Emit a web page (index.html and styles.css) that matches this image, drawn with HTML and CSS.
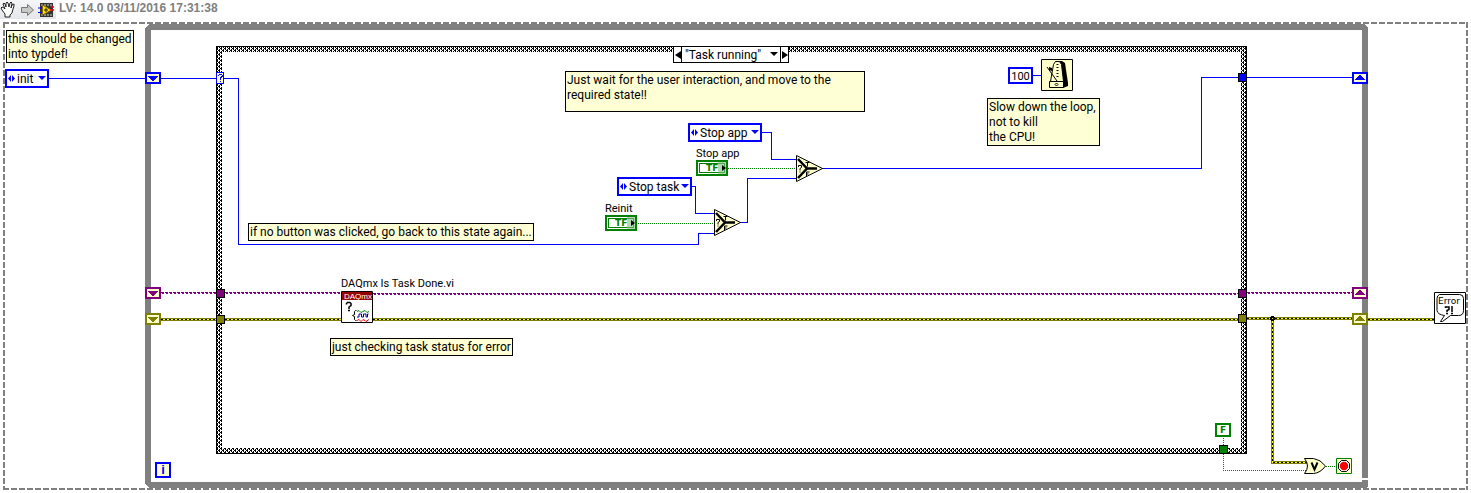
FILE: index.html
```
<!DOCTYPE html>
<html lang="en">
<head>
<meta charset="utf-8">
<title>Block diagram</title>
<link rel="stylesheet" href="styles.css">
</head>
<body>
<main class="canvas">
  <header class="snippet-bar">
    <svg class="snippet-icons" width="56" height="19" viewBox="0 0 56 19" aria-hidden="true">
      <path d="M5 17v-3l-3-4-1-2 1-1 2 1 1 1-2-5 1-1 1 1 1 3V3l1-1 1 1 1 4 1-4 1-1 1 1-1 5 1-3 2-1v2l-1 3-1 4-2 2v2z" fill="#fff" stroke="#222"/>
      <path d="M21.500 7.500h6v-3l6 5.500-6 5.500v-3h-6z" fill="#c8c8c8" stroke="#777"/>
      <path d="M40 3h13v14H40z" fill="#333"/>
      <path d="M41 5h12M41 15h12" stroke="#ddd" stroke-dasharray="2 1"/>
      <path d="M38 8h5M38 12.500h5" stroke="#00f"/>
      <path d="M42.500 5v10l9-5z" fill="#fd0" stroke="#860"/>
      <path d="M50 10h4M51 7h3" stroke="#f00" stroke-width="1.500"/>
      <path d="M44 10h4m-2-2v4" stroke="#222"/>
    </svg>
    <span class="snippet-title">LV: 14.0 03/11/2016 17:31:38</span>
  </header>

  <svg class="wires" width="1471" height="493" viewBox="0 0 1471 493" aria-hidden="true">
    <defs>
      <pattern id="hatch" width="4" height="4" patternUnits="userSpaceOnUse" shape-rendering="crispEdges">
        <rect width="4" height="4" fill="#fff"/>
        <path d="M0 0h2v1H0zM1 1h1v1H1zM3 1h1v1H3zM2 2h2v1H2zM1 3h1v1H1zM3 3h1v1H3z"/>
      </pattern>
      <g id="select-node">
        <path d="M.5 .5v26L26.500 13.500z" fill="#ffffcc" stroke="#000"/>
        <path d="M2 4l9 9.500L2 23M10 13.500h11" fill="none" stroke="#000" stroke-width="2.500"/>
        <path d="M2.500 12v-1.500h3v2l-1.500 1v2M3.500 17h1M9.500 7.500h4M11.500 7.500v4M10.500 21v-4h3M10.500 19h2" fill="none" stroke="#000"/>
      </g>
      <g id="down"><path d="M3 4h10v1H3zM4 5h8v1H4zM5 6h6v1H5zM6 7h4v1H6zM7 8h2v1H7z"/></g>
      <g id="up"><path d="M7 3h2v1H7zM6 4h4v1H6zM5 5h6v1H5zM4 6h8v1H4zM3 7h10v1H3z"/></g>
    </defs>
    <g shape-rendering="crispEdges">
      <path d="M3 23H1468M4 22V490M1467 22V490M3 489H1468" fill="none" stroke="#808080" stroke-width="2" stroke-dasharray="6 2"/>
      <path d="M149 24H1364l4 4V478H1362V30H151V482H1362V480H1368V486l-2 2H149l-4-4V28z" fill="#808080"/>
      <path d="M216 46H1247V454H216zM222 52V448H1241V52z" fill="url(#hatch)" fill-rule="evenodd"/>
      <path d="M216.500 46.500H1246.500V453.500H216.500z" fill="none" stroke="#000"/>

      <g fill="none" stroke="#0000ff">
        <path d="M49 78.500H145M161 78.500H216M224 78.500H238.500V244.500H698.500V233.500H714"/>
        <path d="M692 186.500H695.500V213.500H714M740 222.500H747.500V178.500H796M762 132.500H771.500V159.500H796"/>
        <path d="M822 168.500H1201.500V77.500H1238M1247 77.500H1352M1033 75.500H1041"/>
      </g>
      <g fill="none" stroke="#008000" stroke-dasharray="1 1">
        <path d="M728 168.500H797M638 223.500H714M1223.500 438V470.500H1306M1326 466.500H1336"/>
      </g>
      <g fill="none" stroke="#800080">
        <path d="M161 292.500H341M373 293.500H1238M1247 292.500H1352" stroke-dasharray="3 1"/>
        <path d="M161 293.500H341M373 294.500H1238M1247 293.500H1352" stroke-dasharray="2 2" stroke-dashoffset="3"/>
      </g>
      <g fill="none">
        <path d="M161 319.500H341M373 319.500H1238M1247 318.500H1352M1368 319.500H1434M1272.500 319V462.500H1308" stroke="#808000" stroke-width="3"/>
        <path d="M161 319.500H341M373 319.500H1238M1247 318.500H1352M1368 319.500H1434M1272.500 319V462.500H1308" stroke="#ffff00"/>
        <path d="M161 319.500H341M373 319.500H1238M1247 318.500H1352M1368 319.500H1434M1272.500 319V462.500H1308" stroke="#000" stroke-dasharray="2 2"/>
      </g>
      <path d="M1271 316h3v1h1v3h-1v1h-3v-1h-1v-3h1z"/><path d="M1272 318h1v1h-1z" fill="#ff0"/>

      <g stroke="#000">
        <path d="M1238.500 73.500h8v8h-8z" fill="#0000ff"/>
        <path d="M216.500 289.500h8v8h-8zM1238.500 289.500h8v8h-8z" fill="#800080"/>
        <path d="M216.500 315.500h8v8h-8zM1238.500 314.500h8v8h-8z" fill="#808000"/>
        <path d="M1219.500 445.500h8v8h-8z" fill="#008000"/>
      </g>
      <g fill="#ffffcc" stroke-width="2">
        <path d="M146 73h14v10h-14zM1353 73h14v10h-14z" stroke="#0000ff"/>
        <path d="M146 288h14v10h-14zM1353 288h14v10h-14z" stroke="#800080"/>
        <path d="M146 314h14v10h-14zM1353 314h14v10h-14z" stroke="#808000"/>
        <path d="M216.500 72.500h7v11h-7z" stroke="#0000ff" stroke-width="1"/>
      </g>
      <use href="#down" x="145" y="72" fill="#0000ff"/><use href="#up" x="1352" y="72" fill="#0000ff"/>
      <use href="#down" x="145" y="287" fill="#800080"/><use href="#up" x="1352" y="287" fill="#800080"/>
      <use href="#down" x="145" y="313" fill="#808000"/><use href="#up" x="1352" y="313" fill="#808000"/>
      <path d="M218 75h1v-1h3v1h1v2h-1v1h-1v2h-1v-3h1v-1h1v-1h-3v1h-1zM220 81h1v1h-1z" fill="#0000ff"/>
    </g>
    <use href="#select-node" x="796" y="155"/>
    <use href="#select-node" x="714" y="209"/>
    <path d="M1304.500 458.500h9q7 1 12 7.500-5 7-12 7.500h-9q6-7.500 0-15z" fill="#ffffcc" stroke="#000"/>
    <path d="M1311.500 462.500l3 7 3-7" fill="none" stroke="#000" stroke-width="2"/>
    <path d="M1336.500 458.500h15v15h-15z" fill="#ffffcc" stroke="#008000"/>
    <path d="M1341.500 460.500h5l3 3v5l-3 3h-5l-3-3v-5z" fill="#fff" stroke="#000"/>
    <circle cx="1344" cy="466" r="4.200" fill="#f00"/>
  </svg>

  <p class="note note-typedef">this should be changed<br>into typdef!</p>
  <p class="note note-wait">Just wait for the user interaction, and move to the<br>required state!!</p>
  <p class="note note-slow">Slow down the loop,<br>not to kill<br>the CPU!</p>
  <p class="note note-idle">if no button was clicked, go back to this state again...</p>
  <p class="note note-check">just checking task status for error</p>

  <div class="enum enum-init"><select aria-label="Initial state"><option>init</option></select></div>
  <div class="enum enum-app"><select aria-label="Stop app state"><option>Stop app</option></select></div>
  <div class="enum enum-task"><select aria-label="Stop task state"><option>Stop task</option></select></div>

  <div class="case-selector">
    <button type="button" aria-label="Previous case"><svg width="6" height="8" viewBox="0 0 6 8"><path d="M6 0v8L0 4z"/></svg></button>
    <select aria-label="Case"><option>"Task running"</option></select>
    <button type="button" aria-label="Next case"><svg width="6" height="8" viewBox="0 0 6 8"><path d="M0 0v8l6-4z"/></svg></button>
  </div>

  <div class="terminal terminal-app">
    <label for="stop-app">Stop app</label>
    <button type="button" id="stop-app"><span>TF</span></button>
  </div>
  <div class="terminal terminal-reinit">
    <label for="reinit">Reinit</label>
    <button type="button" id="reinit"><span>TF</span></button>
  </div>

  <input class="number" type="text" value="100" aria-label="Wait in milliseconds">
  <svg class="metronome" width="32" height="32" viewBox="0 0 32 32" role="img" aria-label="Wait">
    <path d="M.5 .5h31v31H.5z" fill="#ffffcc" stroke="#000"/>
    <path d="M15 2h6l3 2 3 20v3l-5 2z"/>
    <path d="M12.500 5.500l2-3h4l2 3 2 17h-13z" fill="#ffffcc" stroke="#000"/>
    <path d="M8.500 22.500h14v6h-14z" fill="#ffffcc" stroke="#000"/>
    <path d="M15.500 24l1.500 1.500-1.500 1.500-1.500-1.500zM6 8l10 14" fill="none" stroke="#000"/>
    <path d="M16.500 5v14" stroke="#000" stroke-width="2" stroke-dasharray="1 2"/>
    <path d="M8 8l3 1v3l-3-1z"/>
  </svg>

  <div class="vi">
    <span class="vi-name">DAQmx Is Task Done.vi</span>
    <svg width="32" height="32" viewBox="0 0 32 32" aria-hidden="true">
      <path d="M.5 .5h31v31H.5z" fill="#fff" stroke="#000"/>
      <path d="M1 1h30v8H1z" fill="#990000"/>
      <text class="vi-brand" x="3" y="8">DAQmx</text>
      <path d="M5.500 13.500v-1l1-1h2.500l1 1v2l-2 1.500v2M7 19.500h2" fill="none" stroke="#000" stroke-width="1.500"/>
      <path d="M15.500 19.500h-1l-1 1v3l-2 1 2 1v3l1 1h1" fill="none" stroke="#000"/>
      <path d="M16 20.500l2-1 2 2 2-1 2-1 2 2 2-1" fill="none" stroke="#008000"/>
      <path d="M16 26h2v-3h2.500v3h2v-3h2.500v3h1.500v-3h1" fill="none" stroke="#000099"/>
      <path d="M16 29.500l2-1 2 2 2-2 2 1 1 1 3-2" fill="none" stroke="#f00"/>
    </svg>
  </div>

  <svg class="error-vi" width="32" height="32" viewBox="0 0 32 32" role="img" aria-label="Simple error handler">
    <path d="M.5 .5h31v31H.5z" fill="#fff" stroke="#000"/>
    <path d="M5.500 2.500h20q4 0 4 4v12q0 5-5 5h-8l-8 6H6.500l4-6q-7-1-7.500-5V6.500q0-3 2.500-4z" fill="#fff" stroke="#000"/>
    <text class="error-word" x="4" y="12">Error</text>
    <path d="M11.500 16v-1h3.500v2.500l-2 1v1.500M12 21.500h2M18 14v6M17 21.500h2" fill="none" stroke="#000" stroke-width="1.500"/>
  </svg>

  <span class="false-const">F</span>
  <span class="iteration">i</span>
</main>
</body>
</html>
```
FILE: styles.css
```
* { box-sizing: border-box; }

body {
  margin: 0;
  background: #fff;
  color: #000;
  font: 12px/15px Roboto, "Open Sans", sans-serif;
}

.canvas { position: relative; min-height: 100vh; overflow: hidden; }

.snippet-bar { display: flex; align-items: flex-start; gap: 3px; }
.snippet-icons { background: linear-gradient(#f6f6f8, #e4e6ea); }
.snippet-title { font: bold 12px/16px "Liberation Sans", Arial, sans-serif; color: #808080; }

.wires { position: absolute; left: 0; top: 0; }

/* Free labels */
.note {
  position: absolute;
  margin: 0;
  padding: 1px 1px 0;
  border: 1px solid #000;
  background: #ffffd6;
  line-height: 15px;
  white-space: nowrap;
}
.note-typedef { left: 6px; top: 30px; min-width: 128px; }
.note-wait { left: 565px; top: 71px; width: 300px; padding-bottom: 8px; }
.note-slow { left: 987px; top: 98px; min-width: 113px; }
.note-idle { left: 248px; top: 223px; min-width: 284px; }
.note-check { left: 330px; top: 338px; min-width: 179px; }

/* Enum constants */
select {
  appearance: none;
  margin: 0;
  padding: 0;
  border: 0;
  background: none;
  color: inherit;
  font: inherit;
}
.enum {
  position: absolute;
  display: flex;
  height: 19px;
  border: 2px solid #0000ff;
  background: #fff;
}
.enum select { flex: 1; padding: 1px 0 0 10px; }
.enum::before {
  content: "";
  position: absolute;
  left: 1px;
  top: 4px;
  width: 7px;
  height: 7px;
  background: #0000ff;
  clip-path: polygon(0 50%, 43% 0, 43% 100%, 57% 100%, 57% 0, 100% 50%, 57% 100%, 43% 100%);
}
.enum::after, .case-selector::after {
  content: "";
  position: absolute;
  right: 1px;
  top: 5px;
  border: 4px solid transparent;
  border-top-color: #0000ff;
  border-bottom: 0;
  pointer-events: none;
}
.enum-init { left: 5px; top: 69px; width: 44px; }
.enum-app { left: 688px; top: 123px; width: 74px; }
.enum-task { left: 617px; top: 177px; width: 75px; }

/* Case structure selector */
.case-selector {
  position: absolute;
  left: 673px;
  top: 46px;
  display: flex;
  width: 116px;
  height: 17px;
  border: 1px solid #000;
  background: #fff;
}
.case-selector select { flex: 1; padding: 1px 0 0 3px; border: solid #000; border-width: 0 1px; }
.case-selector button {
  display: grid;
  place-items: center;
  width: 7px;
  padding: 0;
  border: 0;
  background: none;
}
.case-selector::after { right: 10px; border-top-color: #000; }

/* Boolean terminals */
.terminal { position: absolute; font-size: 11px; line-height: 14px; }
.terminal label { display: block; padding-top: 1px; line-height: 13px; }
.terminal button {
  position: relative;
  display: block;
  width: 32px;
  height: 16px;
  padding: 1px;
  border: 2px solid #008000;
  background: #fff;
}
.terminal button span {
  display: block;
  height: 10px;
  padding-left: 6px;
  border: 1px solid #008000;
  color: #008000;
  font: bold 9px/8px "DejaVu Sans", sans-serif;
  text-align: left;
}
.terminal button::before {
  content: "";
  position: absolute;
  right: 0;
  top: 0;
  width: 8px;
  height: 12px;
  background: rgba(128, 192, 128, 0.6);
}
.terminal button::after {
  content: "";
  position: absolute;
  right: 0;
  top: 3px;
  border: 3px solid transparent;
  border-left: 4px solid #000;
  border-right: 0;
}
.terminal-app { left: 696px; top: 146px; }
.terminal-reinit { left: 605px; top: 201px; }

/* Constants and function icons */
.number {
  position: absolute;
  left: 1008px;
  top: 67px;
  width: 25px;
  height: 17px;
  padding: 1px 0 0;
  border: 2px solid #0000ff;
  background: #fff;
  color: #000;
  font: 11px/12px Roboto, sans-serif;
  text-align: center;
}
.metronome { position: absolute; left: 1041px; top: 59px; }

.vi { position: absolute; left: 341px; top: 276px; }
.vi svg { display: block; }
.vi-name { display: block; padding-top: 1px; font-size: 11px; line-height: 14px; white-space: nowrap; }
.vi-brand { fill: #fff; font: 8px "Liberation Sans", sans-serif; }

.error-vi { position: absolute; left: 1434px; top: 292px; }
.error-word { font: 9px "DejaVu Sans", sans-serif; }

.false-const, .iteration { position: absolute; border: 2px solid; text-align: center; }
.false-const {
  left: 1215px;
  top: 423px;
  width: 16px;
  height: 14px;
  border-color: #008000;
  background: #fff;
  color: #008000;
  font: bold 9px/10px "DejaVu Sans", sans-serif;
}
.iteration {
  left: 155px;
  top: 462px;
  width: 16px;
  height: 16px;
  border-color: #0000ff;
  background: #ffffcc;
  color: #0000ff;
  font: bold 13px/12px "Liberation Sans", sans-serif;
}
```
